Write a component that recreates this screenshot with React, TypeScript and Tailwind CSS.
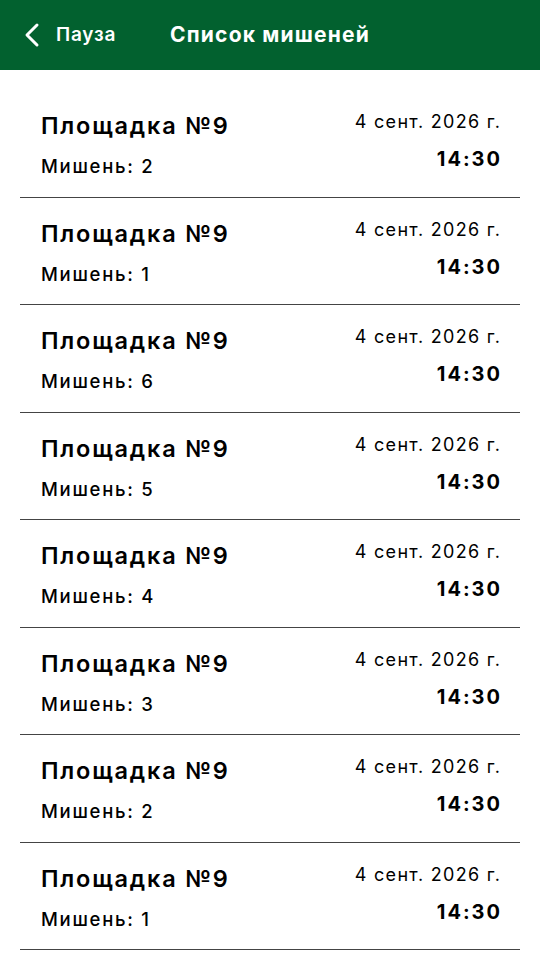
import React from "react";

const targets = [2, 1, 6, 5, 4, 3, 2, 1];

export default function App() {
  return (
    <div className="w-[540px] h-[960px] bg-white overflow-hidden" style={{ fontFamily: "Inter, 'Noto Sans', sans-serif" }}>
      <div className="h-[70px] bg-[#02612f] flex items-center text-white">
        <div className="flex items-center pl-[24px] w-[170px]">
          <svg width="16" height="26" viewBox="0 0 16 26" fill="none">
            <path d="M13 3 L3 13 L13 23" stroke="white" strokeWidth="3" strokeLinecap="round" strokeLinejoin="round" />
          </svg>
          <span className="ml-[16px] text-[19px] font-semibold tracking-[0.8px]">Пауза</span>
        </div>
        <span className="text-[21px] font-bold tracking-[1.2px]">Список мишеней</span>
      </div>
      <div className="pt-[20px] px-[20px]">
        {targets.map((t, i) => (
          <div key={i} className="h-[107.5px] border-b-[1.5px] border-[#444] flex justify-between pl-[21px] pr-[20px] pt-[21px] text-black">
            <div className="flex flex-col">
              <span className="text-[23.5px] font-semibold leading-[30px] tracking-[1.8px]">Площадка №9</span>
              <span className="text-[18.5px] font-medium leading-[24px] mt-[13px] tracking-[1.7px]">Мишень: {t}</span>
            </div>
            <div className="flex flex-col items-end">
              <span className="text-[18px] leading-[24px] tracking-[1.3px] -mr-[1.3px] -mt-[1px]">4 сент. 2026 г.</span>
              <span className="text-[20px] font-bold leading-[26px] mt-[12px] tracking-[2px] -mr-[2px]">14:30</span>
            </div>
          </div>
        ))}
      </div>
    </div>
  );
}
